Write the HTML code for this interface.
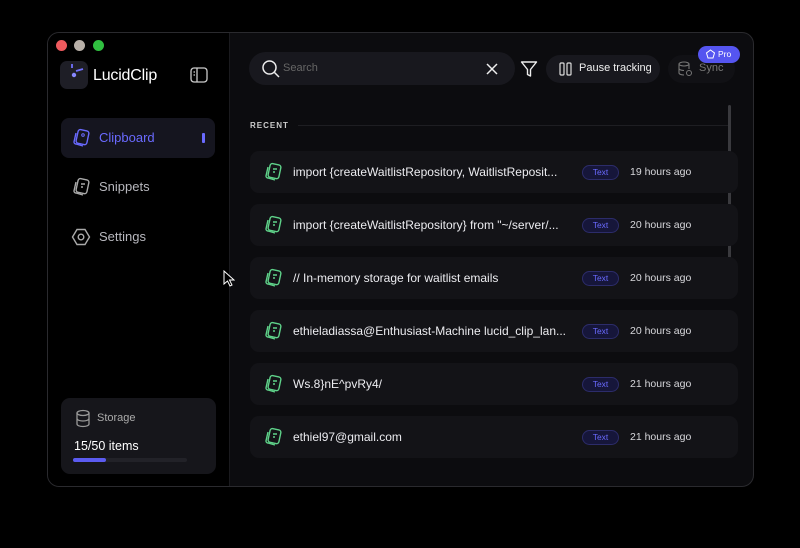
<!DOCTYPE html>
<html><head><style>
*{margin:0;padding:0;box-sizing:border-box}
body{width:800px;height:548px;background:#000;font-family:"Liberation Sans",sans-serif;position:relative;overflow:hidden;color:#e6e6ea}
.win{position:absolute;left:47px;top:32px;width:707px;height:455px;border:1px solid #2a2a2e;border-radius:12px;overflow:hidden;background:#0c0c0f}
.side{position:absolute;left:0;top:0;width:182px;height:100%;background:#000;border-right:1px solid #1a1a1e}
.dot{position:absolute;top:7px;width:11px;height:11px;border-radius:50%}
.abs{position:absolute}
.nav{position:absolute;left:13px;width:154px;height:40px;border-radius:8px;font-size:13px;color:#b8b8be}
.nav span{position:absolute;left:38px;top:12px}
.nav svg{position:absolute;left:10px;top:10px}
.row{position:absolute;left:202px;width:488px;height:42px;background:#131317;border-radius:9px}
.row .t{position:absolute;left:43px;top:14px;font-size:12px;color:#ececf0;white-space:nowrap;max-width:280px;overflow:hidden;text-overflow:ellipsis}
.row svg{position:absolute;left:13px;top:11px}
.badge{position:absolute;left:332px;top:14px;width:37px;height:15px;border:1px solid #2c2c6a;background:#16163a;border-radius:8px;color:#6a6aff;font-size:8.5px;text-align:center;line-height:13px}
.tm{position:absolute;left:380px;top:15px;font-size:10.5px;color:#d8d8dc}
</style></head><body>
<div class="win">
<div class="side">
<div class="dot" style="left:8px;background:#ee5a5e"></div>
<div class="dot" style="left:26px;background:#b8b0a8"></div>
<div class="dot" style="left:45px;background:#30c040"></div>
<div class="abs" style="left:12px;top:28px;width:28px;height:28px;border-radius:7px;background:#1e1e26"></div>
<svg class="abs" style="left:12px;top:28px" width="28" height="28"><circle cx="14" cy="14" r="2.2" fill="#8888ff"/><path d="M12 3v4M16 10l7-2" stroke="#7070ff" stroke-width="1.8"/></svg>
<div class="abs" style="left:45px;top:34px;font-size:16px;color:#fff;letter-spacing:-0.2px">LucidClip</div>
<svg class="abs" style="left:142px;top:34px" width="18" height="16"><rect x="1" y="1" width="16" height="14" rx="3" fill="none" stroke="#ccc" stroke-width="1.3"/><path d="M7 1v14M3.5 5h1.5M3.5 8h1.5" stroke="#ccc" stroke-width="1.3"/></svg>
<div class="nav" style="top:85px;background:#15151f;color:#6a6aff"><svg width="20" height="20"><rect x="6" y="2" width="11" height="14" rx="2.5" fill="none" stroke="#6a6aff" stroke-width="1.4" transform="rotate(12 11 9)"/><path d="M5 5l-2 9a2 2 0 0 0 2 2l7 2" fill="none" stroke="#6a6aff" stroke-width="1.4"/><circle cx="12" cy="7" r="1.3" fill="none" stroke="#6a6aff"/></svg><span>Clipboard</span><div class="abs" style="left:141px;top:15px;width:3px;height:10px;background:#6a6aff;border-radius:1px"></div></div>
<div class="nav" style="top:134px"><svg width="20" height="20"><rect x="6" y="2" width="11" height="14" rx="2.5" fill="none" stroke="#aaa" stroke-width="1.4" transform="rotate(12 11 9)"/><path d="M5 5l-2 9a2 2 0 0 0 2 2l7 2M10 7h4M10 10h2" fill="none" stroke="#aaa" stroke-width="1.4"/></svg><span>Snippets</span></div>
<div class="nav" style="top:184px"><svg width="20" height="20"><path d="M6 2.5h8l4.5 7.5-4.5 7.5H6L1.5 10z" fill="none" stroke="#aaa" stroke-width="1.4"/><circle cx="10" cy="10" r="2.8" fill="none" stroke="#aaa" stroke-width="1.4"/></svg><span>Settings</span></div>
<div class="abs" style="left:13px;top:365px;width:155px;height:76px;border-radius:9px;background:#16161b">
<svg class="abs" style="left:14px;top:11px" width="16" height="19"><ellipse cx="8" cy="4" rx="6" ry="2.5" fill="none" stroke="#999" stroke-width="1.3"/><path d="M2 4v11c0 1.5 2.7 2.5 6 2.5s6-1 6-2.5V4M2 9.5c0 1.5 2.7 2.5 6 2.5s6-1 6-2.5" fill="none" stroke="#999" stroke-width="1.3"/></svg>
<div class="abs" style="left:36px;top:14px;font-size:11px;color:#aaa">Storage</div>
<div class="abs" style="left:13px;top:41px;font-size:12.5px;color:#fff">15/50 items</div>
<div class="abs" style="left:12px;top:60px;width:114px;height:4px;border-radius:2px;background:#222228"></div>
<div class="abs" style="left:12px;top:60px;width:33px;height:4px;border-radius:2px;background:#5b5bf0"></div>
</div>
</div>
<div class="abs" style="left:201px;top:19px;width:266px;height:33px;border-radius:17px;background:#18181e"></div>
<svg class="abs" style="left:213px;top:26px" width="20" height="20"><circle cx="8.5" cy="8.5" r="6.5" fill="none" stroke="#eee" stroke-width="1.5"/><path d="M13.5 13.5l4.5 4.5" stroke="#eee" stroke-width="1.5"/></svg>
<div class="abs" style="left:235px;top:29px;font-size:11px;color:#666">Search</div>
<svg class="abs" style="left:437px;top:29px" width="14" height="14"><path d="M2 2l10 10M12 2L2 12" stroke="#eee" stroke-width="1.5"/></svg>
<svg class="abs" style="left:472px;top:27px" width="18" height="18"><path d="M1.5 2h15l-6 7.5V16l-3-1.5V9.5z" fill="none" stroke="#eee" stroke-width="1.4" stroke-linejoin="round"/></svg>
<div class="abs" style="left:498px;top:22px;width:114px;height:28px;border-radius:14px;background:#18181e"></div>
<svg class="abs" style="left:511px;top:29px" width="14" height="14"><rect x="1" y="1" width="4" height="12" rx="1" fill="none" stroke="#ddd" stroke-width="1.2"/><rect x="8" y="1" width="4" height="12" rx="1" fill="none" stroke="#ddd" stroke-width="1.2"/></svg>
<div class="abs" style="left:531px;top:29px;font-size:11px;color:#f0f0f0">Pause tracking</div>
<div class="abs" style="left:620px;top:22px;width:67px;height:28px;border-radius:14px;background:#111115"></div>
<svg class="abs" style="left:630px;top:28px" width="14" height="16"><ellipse cx="6" cy="3" rx="5" ry="2" fill="none" stroke="#777" stroke-width="1.1"/><path d="M1 3v9c0 1 2 2 5 2M11 3v5M1 7.5c0 1 2 2 5 2" fill="none" stroke="#777" stroke-width="1.1"/><circle cx="11" cy="12" r="2.5" fill="none" stroke="#777"/></svg>
<div class="abs" style="left:651px;top:29px;font-size:11px;color:#777">Sync</div>
<div class="abs" style="left:650px;top:13px;width:42px;height:17px;border-radius:9px;background:#5555f0;color:#fff;font-size:8.5px;line-height:17px;padding-left:20px">Pro</div>
<svg class="abs" style="left:657px;top:16px" width="11" height="11"><path d="M5.5 1l4 3-1.5 5H3L1.5 4z" fill="none" stroke="#fff" stroke-width="1"/></svg>
<div class="abs" style="left:202px;top:88px;font-size:8px;letter-spacing:1px;color:#ccc;font-weight:bold">RECENT</div>
<div class="abs" style="left:250px;top:92px;width:430px;height:1px;background:#1e1e22"></div>
<div class="abs" style="left:680px;top:72px;width:3px;height:156px;border-radius:2px;background:#3a3a3e"></div>
<div class="row" style="top:118px"><svg width="20" height="20"><rect x="6" y="2" width="11" height="14" rx="2.5" fill="none" stroke="#5fd38a" stroke-width="1.4" transform="rotate(12 11 9)"/><path d="M5 5l-2 9a2 2 0 0 0 2 2l7 2M10 7h4M10 10h2" fill="none" stroke="#5fd38a" stroke-width="1.4"/></svg><div class="t">import {createWaitlistRepository, WaitlistReposit...</div><div class="badge">Text</div><div class="tm">19 hours ago</div></div>
<div class="row" style="top:171px"><svg width="20" height="20"><rect x="6" y="2" width="11" height="14" rx="2.5" fill="none" stroke="#5fd38a" stroke-width="1.4" transform="rotate(12 11 9)"/><path d="M5 5l-2 9a2 2 0 0 0 2 2l7 2M10 7h4M10 10h2" fill="none" stroke="#5fd38a" stroke-width="1.4"/></svg><div class="t">import {createWaitlistRepository} from "~/server/...</div><div class="badge">Text</div><div class="tm">20 hours ago</div></div>
<div class="row" style="top:224px"><svg width="20" height="20"><rect x="6" y="2" width="11" height="14" rx="2.5" fill="none" stroke="#5fd38a" stroke-width="1.4" transform="rotate(12 11 9)"/><path d="M5 5l-2 9a2 2 0 0 0 2 2l7 2M10 7h4M10 10h2" fill="none" stroke="#5fd38a" stroke-width="1.4"/></svg><div class="t">// In-memory storage for waitlist emails</div><div class="badge">Text</div><div class="tm">20 hours ago</div></div>
<div class="row" style="top:277px"><svg width="20" height="20"><rect x="6" y="2" width="11" height="14" rx="2.5" fill="none" stroke="#5fd38a" stroke-width="1.4" transform="rotate(12 11 9)"/><path d="M5 5l-2 9a2 2 0 0 0 2 2l7 2M10 7h4M10 10h2" fill="none" stroke="#5fd38a" stroke-width="1.4"/></svg><div class="t">ethieladiassa@Enthusiast-Machine lucid_clip_lan...</div><div class="badge">Text</div><div class="tm">20 hours ago</div></div>
<div class="row" style="top:330px"><svg width="20" height="20"><rect x="6" y="2" width="11" height="14" rx="2.5" fill="none" stroke="#5fd38a" stroke-width="1.4" transform="rotate(12 11 9)"/><path d="M5 5l-2 9a2 2 0 0 0 2 2l7 2M10 7h4M10 10h2" fill="none" stroke="#5fd38a" stroke-width="1.4"/></svg><div class="t">Ws.8}nE^pvRy4/</div><div class="badge">Text</div><div class="tm">21 hours ago</div></div>
<div class="row" style="top:383px"><svg width="20" height="20"><rect x="6" y="2" width="11" height="14" rx="2.5" fill="none" stroke="#5fd38a" stroke-width="1.4" transform="rotate(12 11 9)"/><path d="M5 5l-2 9a2 2 0 0 0 2 2l7 2M10 7h4M10 10h2" fill="none" stroke="#5fd38a" stroke-width="1.4"/></svg><div class="t">ethiel97@gmail.com</div><div class="badge">Text</div><div class="tm">21 hours ago</div></div>
</div>
<svg class="abs" style="left:223px;top:270px" width="12" height="17"><path d="M1 1v13l3.5-3 2.5 5 2-1-2.5-5H11z" fill="#000" stroke="#fff" stroke-width="1"/></svg>
</body></html>
